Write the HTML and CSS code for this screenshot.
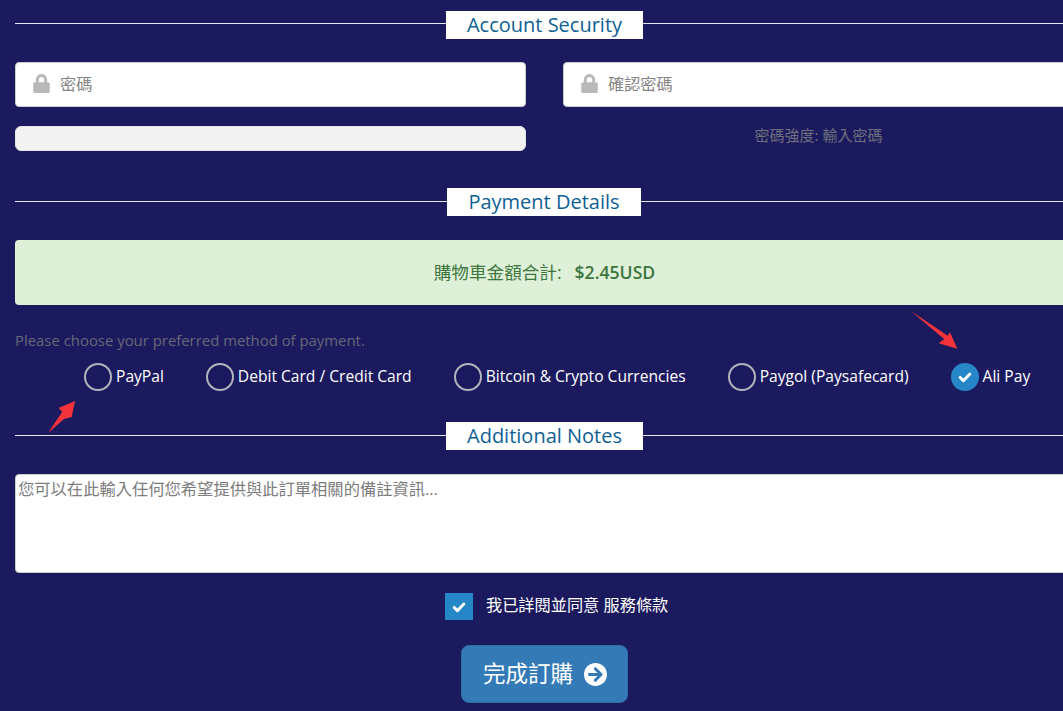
FILE: index.html
```html
<!DOCTYPE html>
<html lang="zh-Hant">
<head>
<meta charset="utf-8">
<title>Checkout</title>
<link rel="stylesheet" href="styles.css">
</head>
<body>
<main class="page">
  <div class="heading heading-first"><span class="rule"></span><h2 class="heading-box">Account Security</h2><span class="rule"></span></div>
  <div class="cols cols-fields">
    <label class="field">
      <svg class="lock" viewBox="0 0 448 512"><path d="M400 224h-24v-72C376 68.2 307.8 0 224 0S72 68.2 72 152v72H48c-26.5 0-48 21.5-48 48v192c0 26.5 21.5 48 48 48h352c26.5 0 48-21.5 48-48V272c0-26.5-21.5-48-48-48zm-104 0H152v-72c0-39.7 32.3-72 72-72s72 32.3 72 72v72z"/></svg>
      <input class="field-input" type="password" placeholder="密碼">
    </label>
    <label class="field">
      <svg class="lock" viewBox="0 0 448 512"><path d="M400 224h-24v-72C376 68.2 307.8 0 224 0S72 68.2 72 152v72H48c-26.5 0-48 21.5-48 48v192c0 26.5 21.5 48 48 48h352c26.5 0 48-21.5 48-48V272c0-26.5-21.5-48-48-48zm-104 0H152v-72c0-39.7 32.3-72 72-72s72 32.3 72 72v72z"/></svg>
      <input class="field-input" type="password" placeholder="確認密碼">
    </label>
  </div>
  <div class="cols cols-strength">
    <div class="strength-bar"></div>
    <div class="strength-text">密碼強度: 輸入密碼</div>
  </div>

  <div class="heading heading-payment"><span class="rule"></span><h2 class="heading-box heading-box-narrow">Payment Details</h2><span class="rule"></span></div>
  <div class="total">購物車金額合計:<strong class="total-value">$2.45USD</strong></div>
  <p class="prompt">Please choose your preferred method of payment.</p>
  <div class="methods">
    <div class="method"><span class="radio"></span>PayPal</div>
    <div class="method"><span class="radio"></span>Debit Card / Credit Card</div>
    <div class="method"><span class="radio"></span>Bitcoin &amp; Crypto Currencies</div>
    <div class="method"><span class="radio"></span>Paygol (Paysafecard)</div>
    <div class="method"><span class="radio radio-on"><svg class="tick" viewBox="0 0 16 16"><path d="M2.5 8.5l3.7 3.7 7.3-7.6"/></svg></span>Ali Pay</div>
  </div>

  <div class="heading heading-notes"><span class="rule"></span><h2 class="heading-box">Additional Notes</h2><span class="rule"></span></div>
  <textarea class="notes" placeholder="您可以在此輸入任何您希望提供與此訂單相關的備註資訊..."></textarea>
  <div class="agree">
    <span class="checkbox"><svg class="tick" viewBox="0 0 16 16"><path d="M2.5 8.5l3.7 3.7 7.3-7.6"/></svg></span>
    <span class="agree-text">我已詳閱並同意 服務條款</span>
  </div>
  <div class="submit-row">
    <button class="submit" type="button"><span class="submit-label">完成訂購</span><svg class="submit-icon" viewBox="8 8 496 496"><path d="M256 8c137 0 248 111 248 248S393 504 256 504 8 393 8 256 119 8 256 8zm-28.9 143.6l75.5 72.4H120c-13.3 0-24 10.7-24 24v16c0 13.3 10.7 24 24 24h182.6l-75.5 72.4c-9.7 9.3-9.9 24.8-.4 34.3l11 10.9c9.4 9.4 24.6 9.4 33.9 0L404.3 273c9.4-9.4 9.4-24.6 0-33.9L271.6 106.3c-9.4-9.4-24.6-9.4-33.9 0l-11 10.9c-9.3 9.6-9.1 25.1.4 34.4z"/></svg></button>
  </div>
</main>
<svg class="arrow arrow-left" viewBox="0 0 30 34"><polygon points="1,33 15.3,11.7 11.5,8 28,1 24.7,17 17,19"/></svg>
<svg class="arrow arrow-right" viewBox="0 0 48 40"><polygon points="1,1 37.7,25.7 40,22.3 47.3,38.7 28.7,33.3 34.3,29.3"/></svg>
</body>
</html>
```
FILE: styles.css
```css
html, body {
  margin: 0;
  height: 711px;
  overflow: hidden;
  background: #1c1a5e;
}
body {
  position: relative;
  font-family: "Open Sans", "Noto Sans CJK TC", sans-serif;
  color: #fff;
}
.page {
  width: 1059px;
  margin-left: 15px;
  padding-top: 11px;
}
.heading {
  display: flex;
  align-items: flex-start;
}
.heading-payment { margin-top: 37px; padding-right: 1px; }
.heading-notes { margin-top: 31px; }
.rule {
  flex: 1;
  height: 1px;
  margin-top: 12px;
  background: #e6e6ef;
}
.heading-payment .rule { margin-top: 13px; }
.heading-notes .rule { margin-top: 13px; }
.heading-box {
  margin: 0;
  width: 197px;
  height: 28px;
  background: #fff;
  color: #0e5f94;
  font-size: 20px;
  font-weight: 400;
  line-height: 27px;
  text-align: center;
}
.heading-box-narrow { width: 194px; }
.cols {
  display: grid;
  grid-template-columns: 511px 511px;
  column-gap: 37px;
}
.cols-fields { margin-top: 23px; }
.cols-strength { margin-top: 19px; }
.field {
  display: flex;
  align-items: center;
  box-sizing: border-box;
  height: 45px;
  padding-left: 17px;
  background: #fff;
  border: 1px solid #ccc;
  border-radius: 4px;
}
.lock {
  width: 17px;
  height: 19px;
  margin-top: -2px;
  fill: #b9b9b9;
  flex: none;
}
.field-input {
  flex: 1;
  min-width: 0;
  height: 24px;
  margin: 0 0 2px 10px;
  padding: 0;
  border: 0;
  outline: 0;
  background: transparent;
  font: 16.2px "Open Sans", "Noto Sans CJK TC", sans-serif;
}
.field-input::placeholder { color: #858585; opacity: 1; }
.strength-bar {
  height: 25px;
  box-sizing: border-box;
  background: #f3f3f3;
  border: 1px solid #e4e4e8;
  border-radius: 6px;
}
.strength-text {
  color: #6f6f7d;
  font-size: 15px;
  line-height: 19px;
  text-align: center;
}
.total {
  margin-top: 24px;
  height: 65px;
  background: #dff0d8;
  border-radius: 4px;
  color: #3c763d;
  font-size: 17.6px;
  line-height: 65px;
  text-align: center;
}
.total-value {
  margin-left: 13px;
  font-weight: 600;
}
.prompt {
  margin: 25px 0 0;
  color: #676778;
  font-size: 14.9px;
  line-height: 20px;
}
.methods {
  display: flex;
  column-gap: 42px;
  margin-top: 13px;
  padding-left: 69px;
}
.method {
  display: flex;
  column-gap: 4px;
  height: 28px;
  font-size: 15.6px;
  line-height: 26px;
  white-space: nowrap;
}
.radio {
  box-sizing: border-box;
  display: flex;
  align-items: center;
  justify-content: center;
  width: 28px;
  height: 28px;
  border: 2px solid #b4b4bc;
  border-radius: 50%;
}
.radio-on {
  background: #2687c8;
  border-color: #2687c8;
}
.tick {
  width: 14px;
  height: 14px;
  fill: none;
  stroke: #fff;
  stroke-width: 3.4;
  stroke-linecap: round;
  stroke-linejoin: round;
}
.notes {
  display: block;
  box-sizing: border-box;
  width: 100%;
  height: 99px;
  margin-top: 24px;
  padding: 3px 2px;
  border: 1px solid #ccc;
  border-radius: 4px;
  outline: 0;
  resize: none;
  background: #fff;
  font: 16.3px/22px "Open Sans", "Noto Sans CJK TC", sans-serif;
}
.notes::placeholder { color: #7c7c7c; opacity: 1; }
.agree {
  display: flex;
  align-items: center;
  column-gap: 13px;
  height: 27px;
  margin-top: 20px;
  padding-left: 430px;
}
.checkbox {
  display: flex;
  align-items: center;
  justify-content: center;
  width: 28px;
  height: 27px;
  background: #2687c8;
}
.agree-text {
  margin-bottom: 4px;
  font-size: 16.2px;
  line-height: 24px;
}
.submit-row {
  display: flex;
  justify-content: center;
  margin-top: 25px;
}
.submit {
  display: flex;
  align-items: center;
  justify-content: center;
  column-gap: 11px;
  box-sizing: border-box;
  width: 167px;
  height: 58px;
  padding: 0 0 0 1px;
  background: #337ab7;
  border: 1px solid #2e6da4;
  border-radius: 8px;
  color: #fff;
  font: 22.5px "Open Sans", "Noto Sans CJK TC", sans-serif;
}
.submit-label {
  margin-bottom: 4px;
}
.submit-icon {
  width: 23px;
  height: 23px;
  fill: #fff;
}
.arrow {
  position: absolute;
  fill: #f5333a;
}
.arrow-left {
  left: 47px;
  top: 400px;
  width: 30px;
  height: 34px;
}
.arrow-right {
  left: 910px;
  top: 310px;
  width: 48px;
  height: 40px;
}
```
